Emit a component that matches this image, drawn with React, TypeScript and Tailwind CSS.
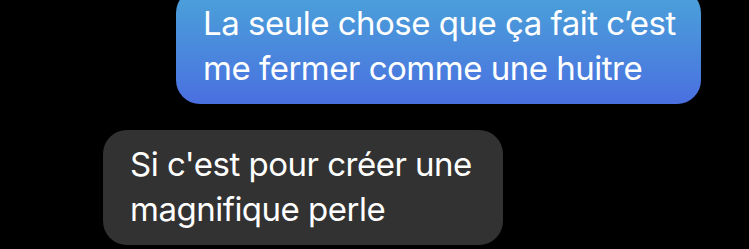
import React from "react";

export default function App() {
  return (
    <div
      className="w-[749px] h-[249px] overflow-hidden bg-black flex flex-col"
      style={{ fontFamily: "Inter, 'Noto Sans', sans-serif" }}
    >
      <div className="flex justify-end pr-[48px] -mt-[11px]">
        <div className="w-[525px] h-[115px] rounded-[24px] bg-gradient-to-b from-[#4ba3d8] to-[#4a6fe0] pl-[27px] pt-[12px] text-white text-[33px] leading-[45px] tracking-[-0.5px]">
          <div className="whitespace-nowrap">La seule chose que ça fait c’est</div>
          <div className="whitespace-nowrap">me fermer comme une huitre</div>
        </div>
      </div>
      <div className="flex pl-[103px] mt-[26px]">
        <div className="w-[400px] h-[115px] rounded-[24px] bg-[#323232] pl-[27px] pt-[12px] text-white text-[33px] leading-[45px] tracking-[-0.5px]">
          <div className="whitespace-nowrap">Si c'est pour créer une</div>
          <div className="whitespace-nowrap">magnifique perle</div>
        </div>
      </div>
    </div>
  );
}
